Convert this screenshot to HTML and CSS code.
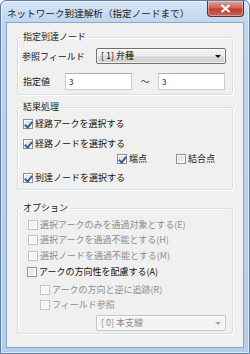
FILE: index.html
```html
<!DOCTYPE html>
<html lang="ja">
  <head>
    <meta charset="UTF-8" />
    <title>ネットワーク到達解析</title>
    <link rel="stylesheet" href="styles.css">
  </head>
  <body>
    <div class="window">
      <div class="titlebar">
        <span class="title">ネットワーク到達解析（指定ノードまで）</span>
        <span class="close">
          <svg width="11" height="9" viewBox="0 0 11 9">
            <path d="M1.5 1 L9.5 8 M9.5 1 L1.5 8" stroke="#fff" stroke-width="2.2" />
          </svg>
        </span>
      </div>
      <div class="client">
        <fieldset class="group group-target">
          <legend>指定到達ノード</legend>
          <div class="row row-field">
            <span class="label label-field">参照フィールド</span>
            <span class="select">[ 1] 弁種<i class="arrow"></i></span>
          </div>
          <div class="row row-value">
            <span class="label label-value">指定値</span>
            <span class="input">3</span>
            <span class="tilde">～</span>
            <span class="input">3</span>
          </div>
        </fieldset>

        <fieldset class="group group-result">
          <legend>結果処理</legend>
          <label class="check r1"><span class="box on"></span>経路アークを選択する</label>
          <label class="check r2"><span class="box on"></span>経路ノードを選択する</label>
          <div class="subrow">
            <label class="check end"><span class="box on"></span>端点</label>
            <label class="check"><span class="box"></span>結合点</label>
          </div>
          <label class="check r4"><span class="box on"></span>到達ノードを選択する</label>
        </fieldset>

        <fieldset class="group group-option">
          <legend>オプション</legend>
          <label class="check off o1"><span class="box"></span>選択アークのみを通過対象とする(E)</label>
          <label class="check off o2"><span class="box"></span>選択アークを通過不能とする(H)</label>
          <label class="check off o3"><span class="box"></span>選択ノードを通過不能とする(M)</label>
          <label class="check o4"><span class="box"></span>アークの方向性を配慮する(A)</label>
          <label class="check off o5"><span class="box"></span>アークの方向と逆に追跡(R)</label>
          <label class="check off o6"><span class="box"></span>フィールド参照</label>
          <span class="select select-off">[ 0] 本支線<i class="arrow"></i></span>
        </fieldset>
      </div>
    </div>
  </body>
</html>
```

FILE: styles.css
```css
body {
  margin: 0;
  font-family: "Noto Sans CJK JP", "Noto Sans", sans-serif;
  font-size: 9px;
  color: #111;
}

.window {
  width: 250px;
  height: 354px;
  box-sizing: border-box;
  border: 1px solid #5b7ea8;
  border-radius: 6px 6px 0 0;
  background: linear-gradient(#d6e5f5, #bcd4ee 24px, #b4cdea);
  box-shadow: inset 0 0 0 1px rgba(255, 255, 255, 0.55);
  padding: 0 5px 5px;
  display: flex;
  flex-direction: column;
}

.titlebar {
  height: 21px;
  display: flex;
  align-items: flex-start;
}

.title {
  font-size: 9.6px;
  line-height: 12px;
  margin-top: 6px;
  padding-left: 1px;
  color: #1a1a1a;
}

.close {
  margin-left: auto;
  margin-right: 0;
  width: 37px;
  height: 16px;
  box-sizing: border-box;
  border: 1px solid #6b2a24;
  border-top: none;
  border-radius: 0 0 4px 4px;
  background: linear-gradient(#e3a69c, #cd6457 45%, #bb3f31 55%, #c9665a);
  box-shadow: inset 0 0 0 1px rgba(255, 255, 255, 0.35);
  display: flex;
  align-items: center;
  justify-content: center;
}

.client {
  flex: 1;
  background: #f0f0f0;
  border: 1px solid #8aa6c8;
  padding: 8px 10px 0;
}

.group {
  margin: 0;
  padding: 0 4px;
  min-width: 0;
  border: 1px solid #d5dfe5;
  border-radius: 3px;
  box-shadow: inset 1px 1px 0 #fff, 1px 1px 0 #fff;
}

.group legend {
  padding: 0 2px;
  margin-left: -1px;
  line-height: 12px;
  color: #1a1a1a;
}

.group-target {
  padding-bottom: 4px;
}

.group-result {
  margin-top: 6px;
  padding-bottom: 5px;
}

.group-option {
  margin-top: 12px;
  padding-bottom: 2px;
}

.row {
  display: flex;
  align-items: center;
}

.row-field {
  margin-top: 5px;
  height: 16px;
}

.row-value {
  margin-top: 9px;
  height: 17px;
}

.label-field {
  width: 74px;
}

.label-value {
  margin-left: 1px;
  width: 42px;
}

.select {
  width: 130px;
  height: 16px;
  box-sizing: border-box;
  border: 1px solid #707070;
  border-radius: 2px;
  background: linear-gradient(#f4f4f4, #ebebeb 50%, #dcdcdc 51%, #cfcfcf);
  box-shadow: inset 0 0 0 1px rgba(255, 255, 255, 0.7);
  padding-left: 4px;
  line-height: 14px;
  display: flex;
  align-items: center;
  color: #111;
}

.arrow {
  margin-left: auto;
  margin-right: 4px;
  border-left: 3px solid transparent;
  border-right: 3px solid transparent;
  border-top: 3px solid #111;
}

.select-off {
  display: flex;
  margin: 4px 0 0 74px;
  border-color: #c5c5c5;
  background: #f4f4f4;
  color: #8a8a8a;
}

.select-off .arrow {
  border-top-color: #a0a0a0;
}

.input {
  width: 67px;
  height: 17px;
  box-sizing: border-box;
  border: 1px solid #c9ccd1;
  border-top-color: #abadb3;
  background: #fff;
  padding-left: 3px;
  line-height: 15px;
  font-size: 8px;
}

.tilde {
  width: 26px;
  text-align: center;
  color: #333;
}

.check {
  display: flex;
  align-items: center;
  height: 12px;
  line-height: 12px;
  gap: 2px;
}

.box {
  width: 10px;
  height: 10px;
  box-sizing: border-box;
  border: 1px solid #8e8f8f;
  background: linear-gradient(135deg, #dcdcdc, #f6f6f6);
  box-shadow: inset 0 0 0 1px #fff;
  position: relative;
}

.box.on::after {
  content: "";
  position: absolute;
  left: 2px;
  top: 0;
  width: 3px;
  height: 6px;
  border: solid #3a5a9a;
  border-width: 0 2px 2px 0;
  transform: rotate(40deg);
}

.off {
  color: #8d8d8d;
}

.off .box {
  border-color: #c2c2c2;
  background: #f4f4f4;
}

.r1 {
  margin: 5px 0 0 1px;
}

.r2 {
  margin: 8px 0 0 1px;
}

.subrow {
  display: flex;
  margin: 3px 0 0 95px;
}

.subrow .end {
  width: 59px;
}

.r4 {
  margin: 7px 0 0 1px;
}

.o1 {
  margin: 5px 0 0 6px;
}

.o2 {
  margin: 3px 0 0 6px;
}

.o3 {
  margin: 4px 0 0 6px;
}

.o4 {
  margin: 4px 0 0 5px;
}

.o5 {
  margin: 6px 0 0 18px;
}

.o6 {
  margin: 3px 0 0 18px;
}
```
